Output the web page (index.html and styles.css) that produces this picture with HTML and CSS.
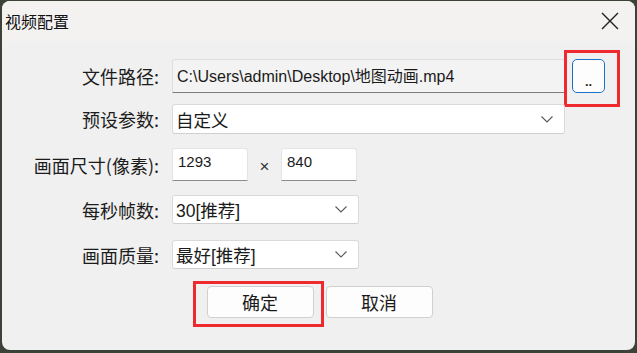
FILE: index.html
```html
<!DOCTYPE html>
<html lang="zh-CN">
<head>
    <meta charset="UTF-8">
    <meta name="viewport" content="width=device-width, initial-scale=1.0">
    <title>视频配置</title>
    <link rel="stylesheet" href="styles.css">
</head>
<body>

<div class="window">
    <!-- 标题栏 -->
    <div class="title-bar">
        <span class="title">视频配置</span>
        <svg class="close-icon" width="18" height="18" viewBox="0 0 18 18">
            <path d="M1 1 L17 17 M17 1 L1 17" stroke="#1f1f1f" stroke-width="1.4" fill="none"/>
        </svg>
    </div>

    <div class="dialog-body">
        <div class="row row-path">
            <label class="label">文件路径:</label>
            <input class="path-input" type="text" value="C:\Users\admin\Desktop\地图动画.mp4" readonly>
            <span class="mark mark-browse">
                <button class="browse-button">..</button>
            </span>
        </div>

        <div class="row row-preset">
            <label class="label">预设参数:</label>
            <div class="combo combo-wide">
                <span>自定义</span>
                <svg class="chevron" width="12" height="7" viewBox="0 0 12 7"><path d="M0.5 0.5 L6 6 L11.5 0.5" stroke="#5a5a5a" stroke-width="1.1" fill="none"/></svg>
            </div>
        </div>

        <div class="row row-size">
            <label class="label">画面尺寸(像素):</label>
            <input class="num-input" type="text" value="1293">
            <span class="times">×</span>
            <input class="num-input" type="text" value="840">
        </div>

        <div class="row row-fps">
            <label class="label">每秒帧数:</label>
            <div class="combo combo-small">
                <span>30[推荐]</span>
                <svg class="chevron" width="12" height="7" viewBox="0 0 12 7"><path d="M0.5 0.5 L6 6 L11.5 0.5" stroke="#5a5a5a" stroke-width="1.1" fill="none"/></svg>
            </div>
        </div>

        <div class="row row-quality">
            <label class="label">画面质量:</label>
            <div class="combo combo-small">
                <span>最好[推荐]</span>
                <svg class="chevron" width="12" height="7" viewBox="0 0 12 7"><path d="M0.5 0.5 L6 6 L11.5 0.5" stroke="#5a5a5a" stroke-width="1.1" fill="none"/></svg>
            </div>
        </div>

        <!-- 按钮 -->
        <div class="button-row">
            <span class="mark mark-ok">
                <button class="dialog-button">确定</button>
            </span>
            <button class="dialog-button">取消</button>
        </div>
    </div>
</div>

</body>
</html>
```

FILE: styles.css
```css
body {
    margin: 0;
    padding: 0;
    background-color: #3d4238;
    font-family: "Liberation Sans", "Noto Sans CJK SC", sans-serif;
    color: #1a1a1a;
}
.window {
    margin: 1px 2px 0 2px;
    height: 349px;
    border-radius: 8px;
    overflow: hidden;
    background-color: #f0f0f0;
}
.title-bar {
    height: 40px;
    display: flex;
    align-items: center;
    justify-content: space-between;
    background-color: #f4f1f1;
    padding: 0 16px 0 3px;
}
.title {
    font-family: "Noto Sans CJK SC", sans-serif;
    font-size: 16px;
    color: #111;
}
.close-icon {
    display: block;
}
.dialog-body {
    padding-top: 18px;
}
.row {
    display: flex;
    align-items: center;
}
.label {
    width: 157px;
    margin-right: 13px;
    text-align: right;
    font-family: "Noto Sans CJK SC", sans-serif;
    font-size: 18px;
    color: #1c1c1c;
}
.row-path {
    height: 34px;
    margin-bottom: 11px;
}
.row-preset {
    height: 30px;
    margin-bottom: 14px;
}
.row-size {
    height: 33px;
    margin-bottom: 14px;
}
.row-fps {
    height: 29px;
    margin-bottom: 16px;
}
.row-quality {
    height: 29px;
    margin-bottom: 17px;
}
.path-input {
    box-sizing: border-box;
    width: 393px;
    height: 34px;
    margin: 0 7px 0 0;
    padding: 0 0 3px 4px;
    font-family: "Liberation Sans", "Noto Sans CJK SC", sans-serif;
    font-size: 16px;
    color: #1a1a1a;
    background-color: #f3f3f3;
    border: 1px solid #dedede;
    border-bottom: 1px solid #7d7d7d;
    border-radius: 3px 3px 0 0;
    outline: none;
}
.mark {
    display: inline-flex;
    border: 3px solid #ee2a2f;
}
.mark-browse {
    padding: 6px 12px 11px 5px;
    margin: -9px -15px -14px -8px;
}
.browse-button {
    box-sizing: border-box;
    width: 33px;
    height: 34px;
    padding: 10px 0 0 0;
    background-color: #fdfdfd;
    border: 1.5px solid #1d71cc;
    border-radius: 5px;
    font-family: "Liberation Sans", sans-serif;
    font-size: 13px;
    font-weight: bold;
    color: #3a2a10;
}
.combo {
    box-sizing: border-box;
    height: 100%;
    display: flex;
    align-items: center;
    justify-content: space-between;
    padding: 0 11px 0 3px;
    background-color: #ffffff;
    border: 1px solid #dadada;
    border-bottom-color: #cfcfcf;
    border-radius: 3px;
    font-size: 17.5px;
}
.combo-wide {
    width: 393px;
}
.combo-small {
    width: 187px;
}
.chevron {
    display: block;
}
.num-input {
    box-sizing: border-box;
    width: 76px;
    height: 33px;
    margin: 0;
    padding: 0 0 6px 5px;
    font-family: "Liberation Sans", sans-serif;
    font-size: 15px;
    color: #1a1a1a;
    background-color: #ffffff;
    border: 1px solid #e4e4e4;
    border-bottom: 1px solid #8c8c8c;
    border-radius: 3px 3px 0 0;
    outline: none;
}
.times {
    width: 33px;
    text-align: center;
    font-size: 17px;
    color: #333;
    padding-top: 4px;
}
.button-row {
    display: flex;
    justify-content: center;
    gap: 12px;
    padding-left: 2px;
}
.mark-ok {
    padding: 2px 7px 6px 11px;
    margin: -5px -10px -9px -14px;
}
.dialog-button {
    box-sizing: border-box;
    width: 107px;
    height: 32px;
    background-color: #fdfdfd;
    border: 1px solid #d0d0d0;
    border-radius: 4px;
    font-family: "Noto Sans CJK SC", sans-serif;
    font-size: 18px;
    color: #1a1a1a;
    padding: 0;
}
```
